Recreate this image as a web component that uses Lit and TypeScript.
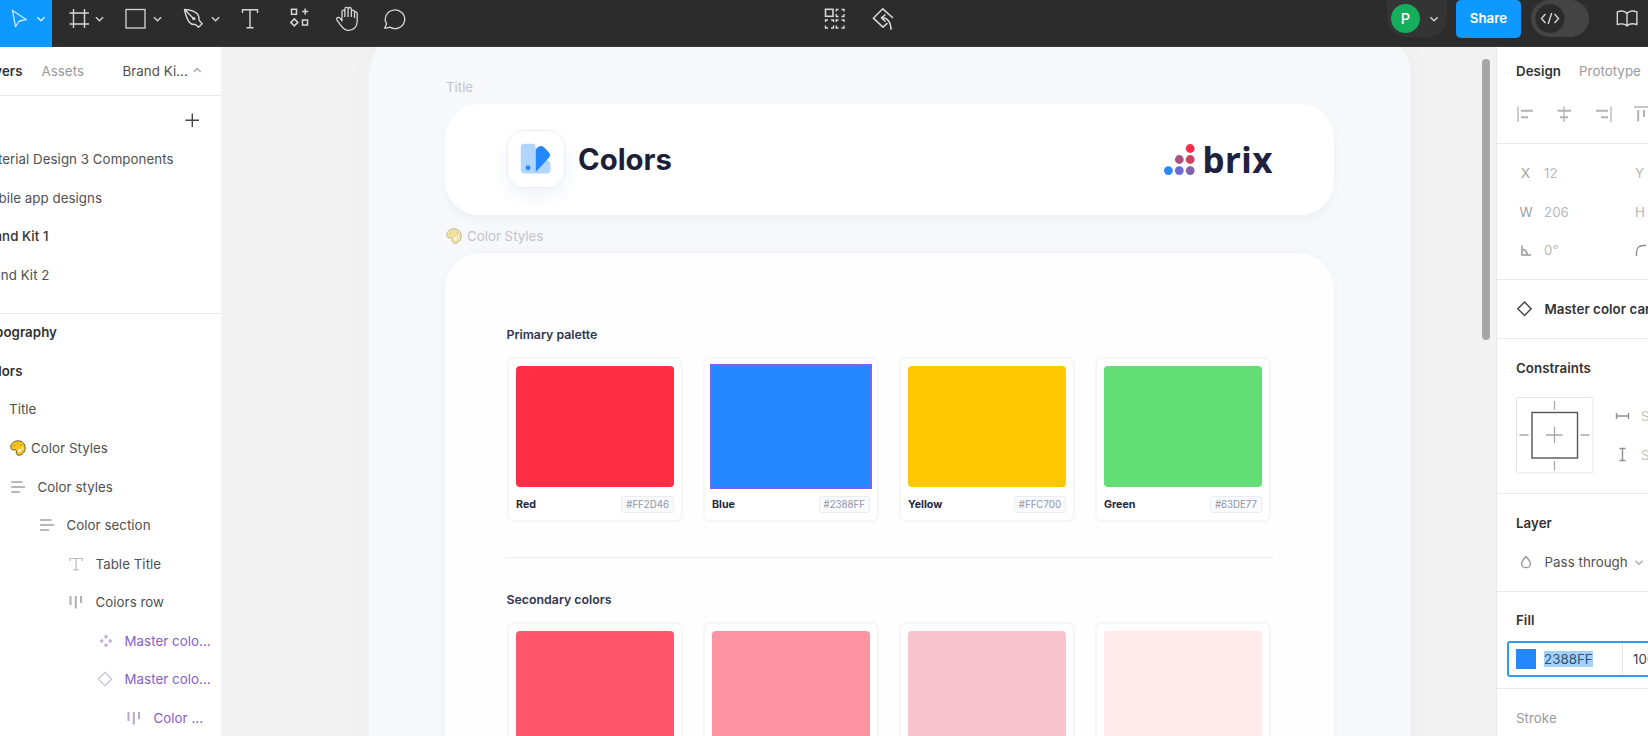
import { LitElement, html, svg, css, nothing } from "lit";
import { customElement } from "lit/decorators.js";
import { styleMap } from "lit/directives/style-map.js";

type Swatch = { name: string; hex: string; color: string; selected?: boolean };

const PRIMARY: Swatch[] = [
  { name: "Red", hex: "#FF2D46", color: "#ff2d46" },
  { name: "Blue", hex: "#2388FF", color: "#2388ff", selected: true },
  { name: "Yellow", hex: "#FFC700", color: "#ffc700" },
  { name: "Green", hex: "#63DE77", color: "#63de77" },
];
const SECONDARY = ["#ff566b", "#fc93a3", "#f8c4ce", "#ffeaec"];

// Icon cell: every icon in a bar shares the bar's coordinate space.
const cell = (x: number, y: number, w: number, h: number, body: unknown) =>
  html`<svg class="cell" width=${w} height=${h} viewBox="${x} ${y} ${w} ${h}" fill="none">${body}</svg>`;

const chevron = (x: number, y: number, c = "#d0d0d0") =>
  svg`<path d="M${x - 3.6} ${y - 1.8}l3.6 3.6l3.6-3.6" stroke=${c} stroke-width="1.5"/>`;

const palette = html`<svg class="cell" width="16" height="16" viewBox="0 0 16 16">
  <path d="M8 .8C3.800.8.8 3.700.8 7.200c0 2 1.700 3 3.400 2.600 1.500-.3 2.500.5 2.100 2-.4 1.900.4 3.400 2.300 3.400 3.800 0 6.600-3.200 6.600-7.300C15.200 3.800 12.200.8 8 .8z" fill="#f7c51c" stroke="#6b5a2b" stroke-width="1"/>
  <circle cx="4.300" cy="5.400" r="1" fill="#d39a18"/><circle cx="7.500" cy="3.600" r="1" fill="#dfaa20"/><circle cx="11" cy="5" r="1" fill="#d39a18"/>
  <circle cx="9.500" cy="10.500" r="1.500" fill="#fff"/><path d="M12.500 7v3" stroke="#fff3c9" stroke-width="1.200"/>
</svg>`;

const stack = svg`<path d="M1 3h9.700M1 8h12.300M1 13h7.300" stroke="#b8b8b8" stroke-width="2.200" stroke-linecap="round"/>`;
const columns = (c: string) => svg`<path d="M2.500 2v9M7.800 2v12.500M13 2v7" stroke=${c} stroke-width="2"/>`;
const icon16 = (body: unknown) => html`<svg class="cell" width="16" height="16" viewBox="0 0 16 16" fill="none">${body}</svg>`;

@customElement("app-root")
export class AppRoot extends LitElement {
  static styles = css`
    :host { display: block; width: 1648px; height: 736px; overflow: hidden; background: #fff;
      font: 400 13.3px/20px Inter, "Liberation Sans", sans-serif; letter-spacing: .05px; color: #505050; }
    * { box-sizing: border-box; }
    .cell { display: block; flex: none; }
    .bar { display: flex; height: 47px; background: #2c2c2c; border-bottom: 1px solid #383838; }
    .move { background: #0d99ff; height: 47px; width: 52px; }
    .mid { margin-left: 380px; display: flex; }
    .end { margin-left: auto; display: flex; align-items: flex-start; }
    .user { width: 60px; height: 37px; border-radius: 0 0 19px 19px; background: #343434; display: flex; align-items: center; padding-left: 4px; }
    .avatar { width: 29px; height: 29px; border-radius: 50%; background: #14ae5c; color: #fff; font-size: 14.5px; line-height: 29px; text-align: center; font-weight: 500; }
    .share { margin-left: 9px; width: 65px; height: 37.500px; border-radius: 5px; background: #0d99ff; color: #fff; font-weight: 600; line-height: 37px; text-align: center; }
    .dev { margin-left: 10px; width: 58px; height: 37px; border-radius: 19px; background: #444; }
    .body { display: flex; height: 689px; }

    .left { width: 221px; flex: none; overflow: hidden; }
    .tabs { display: flex; height: 49px; border-bottom: 1px solid #e9e9e9; align-items: center; }
    .clip { display: flex; justify-content: flex-end; flex: none; white-space: nowrap; line-height: 38.600px; height: 38.600px; }
    .strong { font-weight: 600; color: #333; }
    .mute { color: #9a9a9a; }
    .assets { margin-left: 19px; width: 81px; }
    .pages { height: 217.500px; border-bottom: 1px solid #e9e9e9; }
    .cur { color: #333; font-weight: 500; }
    .add { display: flex; height: 44px; justify-content: flex-end; padding-right: 19px; }
    .row { display: flex; height: 38.550px; align-items: center; white-space: nowrap; }
    .layers { margin-top: -.5px; }
    .purple { color: #8560cf; }

    .canvas { position: relative; width: 1276px; flex: none; background: #f2f2f2; overflow: hidden; padding-left: 148px; border-right: 1px solid #e9e9e9; }
    .frame { margin-top: -18px; width: 1042px; height: 760px; border-radius: 46px; background: #f6f8fc; padding: 47px 77px 0 76px; box-shadow: 0 0 28px rgba(40,50,90,.025); }
    .scroll { position: absolute; left: 1261px; top: 12px; width: 7.500px; height: 281px; border-radius: 4px; background: #a6a6a6; }
    .label { display: flex; align-items: center; gap: 5px; height: 21px; padding-left: 1px; color: #c3c4c8; letter-spacing: 0; }
    .label .cell { opacity: .42; }
    .title { margin-top: 7px; height: 110.500px; border-radius: 34px; background: #fff; display: flex; align-items: center; padding: 0 61px 0 61.500px; box-shadow: 0 5px 10px rgba(30,35,60,.035); }
    .badge { width: 58px; height: 58px; border-radius: 17px; background: #fff; border: 1px solid #eceef5; box-shadow: 0 8px 16px rgba(60,90,200,.08); padding: 12.500px; margin-bottom: 1px; }
    .h1 { margin-left: 13.500px; font-size: 29.300px; line-height: 56px; font-weight: 700; color: #1c1f3a; letter-spacing: 0; padding-top: 1px; }
    .brand { margin-left: auto; display: flex; align-items: center; }
    .brix { width: 70.500px; margin-left: 7.500px; font: 700 35px/50px "Noto Sans", sans-serif; color: #1e2240; letter-spacing: .5px; padding-top: 1px; }
    .second { margin-top: 11px; }
    .panel { margin-top: 6.500px; height: 520px; border-radius: 36px 36px 0 0; background: #fefefe; padding: 72px 61.500px 0 61px; box-shadow: 0 0 10px rgba(30,35,60,.03); }
    .h2 { height: 20px; font-size: 12.350px; font-weight: 600; color: #30344f; padding-left: .5px; letter-spacing: 0; }
    .grid { margin-top: 12px; padding-left: 1px; display: grid; grid-template-columns: repeat(4, 176px); column-gap: 20px; }
    .card { height: 165px; border: 2px solid #f6f6f7; border-radius: 7px; background: #fff; padding: 7px; }
    .fill { height: 121px; border-radius: 4px; }
    .sel { outline: 2px solid #8060f2; outline-offset: -.5px; border-radius: 0; }
    .meta { display: flex; justify-content: space-between; align-items: center; margin-top: 9px; }
    .name { font-size: 10.700px; line-height: 17px; font-weight: 700; color: #23263f; letter-spacing: 0; }
    .chip { height: 17px; border: 1px solid #eaedf4; border-radius: 3px; background: #fafbfe; padding: 0 4px; line-height: 15.500px; font-size: 9.700px; color: #8f94a6; letter-spacing: 0; }
    .rule { height: 1px; background: #f1f1f3; margin: 35px 0 32px; }

    .right { width: 151px; flex: none; overflow: hidden; white-space: nowrap; }
    .sec { border-bottom: 1px solid #e9e9e9; padding-left: 19px; overflow: hidden; }
    .s1 { height: 97px; } .s2 { height: 136px; padding-top: 10px; } .s3 { height: 59px; display: flex; align-items: center; }
    .s4 { height: 155px; } .s5 { height: 98px; } .s6 { height: 97px; padding-left: 10px; padding-top: 7px; }
    .head { height: 57px; line-height: 59px; }
    .two { display: flex; height: 48px; align-items: center; gap: 18px; }
    .field { display: flex; height: 38.600px; align-items: center; color: #b9b9b9; }
    .key { width: 28px; padding-left: 5px; color: #a0a0a0; }
    .wide { padding-left: 3.500px; }
    .val { width: 91px; }
    .cons { display: flex; height: 97px; }
    .size { width: 30px; color: #c4c4c4; line-height: 38.600px; padding: 1px 0 0 10px; }
    .pass { display: flex; align-items: center; height: 20px; margin-top: 1px; }
    .fillhead { height: 42px; line-height: 43px; padding-left: 9px; }
    .input { width: 180px; height: 36px; border: 2px solid #2e9bf3; border-radius: 3px; display: flex; align-items: center; padding-left: 7px; color: #444; }
    .sw { width: 19.500px; height: 19.500px; background: #2388ff; }
    .hl { margin-left: 8.500px; background: #a4d1fb; line-height: 16px; color: #34516d; }
    .pct { margin-left: auto; width: 63px; height: 32px; line-height: 32px; border-left: 1px solid #e6e6e6; padding-left: 10px; }
  `;

  private toolbar() {
    const s = "#d6d6d6";
    return html`<div class="bar">
      <div class="move">${cell(0, 0, 52, 47, svg`<path d="M12.500 10.500l14 9.200-7.200 1.300-3.800 5.600z" stroke="#cfe9ff" stroke-width="1.300" stroke-linejoin="round"/>${chevron(41, 19, "#d8edff")}`)}</div>
      ${cell(52, 0, 60, 46, svg`<path d="M73.500 9v19M84.500 9v19M69.500 13h19.500M69.500 24h19.500" stroke=${s} stroke-width="1.400"/>${chevron(99.500, 19)}`)}
      ${cell(112, 0, 60, 46, svg`<rect x="126" y="9.500" width="19" height="18.500" stroke=${s} stroke-width="1.300"/>${chevron(157.500, 19)}`)}
      ${cell(172, 0, 56, 46, svg`<path d="M184.500 9.500c6 .3 10.500 1.700 13.200 4.800 1.800 2.200 1 4.700 1.600 6.200l2.900 3.300-3.700 3.400-3-2.700c-2.200.2-4.700-.3-6.300-2.500-2.600-3.700-3.700-7.500-4.700-12.500zM185 10l8 8" stroke=${s} stroke-width="1.400" stroke-linejoin="round"/><circle cx="193.800" cy="18.600" r="1.700" fill=${s}/>${chevron(215.500, 19)}`)}
      ${cell(228, 0, 48, 46, svg`<path d="M242.500 13V9.700h15V13M250 9.700v18M246.500 27.700h7" stroke=${s} stroke-width="1.400"/>`)}
      ${cell(276, 0, 48, 46, svg`<g stroke=${s} stroke-width="1.500"><rect x="291.500" y="9.300" width="5" height="5"/><rect x="302.500" y="20" width="5" height="5"/><path d="M305.200 8.500v6.200M302.100 11.600h6.200M294.300 18.900l3.500 3.500-3.500 3.500-3.500-3.500z"/></g>`)}
      ${cell(324, 0, 46, 46, svg`<path d="M342 21v-9.200c0-2.300 2.900-2.300 2.900 0V9c0-2.600 3.200-2.600 3.200 0v.3c0-2.600 3.300-2.300 3.300.3v2c.3-2.200 3.100-1.900 3.100.5 1.500-.9 2.700 0 2.700 1.500v7.900c0 5-3.500 8.800-8.300 8.800-3.200 0-5.500-1.300-7.300-3.900l-4.600-6.300c-1.300-2.200 1.400-3.600 3-2zM344.900 11.500v5.500M348.100 9.500v7.500M351.400 11.500v5.500M354.500 12v6" stroke=${s} stroke-width="1.300" stroke-linejoin="round"/>`)}
      ${cell(370, 0, 48, 46, svg`<path d="M384.600 28.200l2-4.300a9.700 9.300 0 1 1 3.200 3.200c-1.500.7-3.300 1-5.200 1.100z" stroke=${s} stroke-width="1.300" stroke-linejoin="round"/>`)}
      <div class="mid">
        ${cell(798, 0, 56, 46, svg`<g stroke=${s} stroke-width="1.400"><rect x="825.500" y="9.300" width="7.500" height="7" stroke-width="1.600"/><path d="M836.300 11.500v-2h2.200M841.500 9.500h2.500v2M836.300 14v2.500h2.200M841.500 16.500h2.500V14M825.500 22v-2h2.500M831 20h2.500v2M825.500 25.500v2.500h2.500M831 28h2.500v-2.500M836.300 22v-2h2.200M841.500 20h2.500v2M836.300 25.500v2.500h2.200M841.500 28h2.500v-2.500"/></g>`)}
        ${cell(854, 0, 56, 46, svg`<path d="M893 18L882.800 8.800 873.300 18.200l9.700 9 4.500-4M881.500 17.800c5.500-.3 9.300 3.500 9.500 12M885.500 14.500l-4 3.300 4 3.700" stroke=${s} stroke-width="1.600" stroke-linejoin="round"/>`)}
      </div>
      <div class="end">
        <div class="user"><div class="avatar">P</div>${cell(1419, 0, 27, 37, chevron(1433, 19))}</div>
        <div class="share">Share</div>
        <div class="dev">${cell(1531, 0, 58, 37, svg`<circle cx="1550" cy="18.500" r="14.500" fill="#2b2b2b"/><path d="M1545.500 14l-4 4.500 4 4.500M1554.500 14l4 4.500-4 4.500M1551.700 13l-3.500 11" stroke="#d6d6d6" stroke-width="1.400"/>`)}</div>
        ${cell(1589, 0, 59, 46, svg`<path d="M1627 13.500c-2-2.700-6.500-2.700-9.700-1.700v12.700c3.200-1 7.700-.8 9.700 1.500 2-2.300 6.500-2.500 9.900-1.500V11.800c-3.400-1-7.900-1-9.900 1.700zV26" stroke="#d6d6d6" stroke-width="1.400" stroke-linejoin="round"/>`)}
      </div>
    </div>`;
  }

  private clipped(text: string, end: number, cls = "") {
    return html`<div class="clip ${cls}" style=${styleMap({ width: `${end}px` })}>${text}</div>`;
  }

  private layer(text: string, icon: unknown, pad: number, gap: number, cls = "") {
    return html`<div class="row ${cls}" style=${styleMap({ paddingLeft: `${pad}px`, gap: `${gap}px` })}>${icon}<span>${text}</span></div>`;
  }

  private left() {
    return html`<div class="left">
      <div class="tabs">${this.clipped("Layers", 22.500, "strong")}<span class="assets mute">Assets</span><span>Brand Ki...</span>
        ${cell(187, 0, 20, 20, svg`<path d="M192.800 11l3.500-3.500 3.500 3.500" stroke="#aaa" stroke-width="1.300"/>`)}</div>
      <div class="pages">
        <div class="add">${cell(182, 96, 20, 44, svg`<path d="M192.300 113.500v13.500M185.500 120.300h13.500" stroke="#444" stroke-width="1.400"/>`)}</div>
        ${this.clipped("Material Design 3 Components", 173.500)}
        ${this.clipped("Mobile app designs", 102)}
        ${this.clipped("Brand Kit 1", 48.500, "cur")}
        ${this.clipped("Brand Kit 2", 49.500)}
      </div>
      <div class="layers">
        ${this.clipped("Typography", 57, "strong")}
        ${this.clipped("Colors", 22.500, "strong")}
        ${this.layer("Title", nothing, 9, 0)}
        ${this.layer("Color Styles", palette, 10, 5)}
        ${this.layer("Color styles", icon16(stack), 11, 10.500)}
        ${this.layer("Color section", icon16(stack), 40, 10.500)}
        ${this.layer("Table Title", icon16(svg`<path d="M1.800 5V2.500h12.600V5M8.100 2.500v11.300M5.500 13.800h5.200" stroke="#bdbdbd" stroke-width="1.200"/>`), 68, 11.500)}
        ${this.layer("Coiors row", icon16(columns("#b0b0b0")), 68, 11.500)}
        ${this.layer("Master colo...", icon16(svg`<path d="M8 1.500l2.200 2.200L8 5.900 5.800 3.700zM8 10.100l2.200 2.200L8 14.500l-2.200-2.200zM3.700 5.800L5.900 8l-2.200 2.200L1.500 8zM12.300 5.800L14.500 8l-2.200 2.200L10.100 8z" fill="#c0b2dc"/>`), 97.500, 11, "purple")}
        ${this.layer("Master colo...", icon16(svg`<path d="M8 1.300L14.700 8 8 14.700 1.300 8z" stroke="#c6c0d6" stroke-width="1.200"/>`), 97, 11.500, "purple")}
        ${this.layer("Color ...", icon16(columns("#b5abc9")), 126, 11.500, "purple")}
      </div>
    </div>`;
  }

  private canvas() {
    const dots: [number, number, string][] = [
      [4.400, 26.600, "#2a86fb"], [15.300, 26.600, "#6a6bd6"], [26.200, 26.600, "#8063ab"],
      [15.300, 15.500, "#a95383"], [26.200, 15.500, "#d43f5e"], [26.200, 4.500, "#fd2d47"],
    ];
    return html`<div class="canvas">
      <div class="frame">
        <div class="label">Title</div>
        <div class="title">
          <div class="badge"><svg class="cell" width="31" height="31" viewBox="0 0 32 32">
            <path d="M13 31.500L27 17.500C30 18 31.500 19.500 31.500 22v5.500c0 2.500-1.500 4-4 4z" fill="#b2d5ff"/>
            <rect x=".8" y=".8" width="15.400" height="30.700" rx="4" fill="#b2d5ff"/>
            <path d="M16.200 30V6.500l2.500-2.400c1.800-1.500 4-1.500 5.700.1l5.100 5c1.900 1.900 2 4.200.3 6.100z" fill="#2388ff"/>
            <circle cx="8.300" cy="25.500" r="2.500" fill="#2388ff"/>
          </svg></div>
          <div class="h1">Colors</div>
          <div class="brand"><svg class="cell" width="31" height="31" viewBox="0 0 31 31">${dots.map(([x, y, c]) => svg`<circle cx=${x} cy=${y} r="4.400" fill=${c}/>`)}</svg><div class="brix">brix</div></div>
        </div>
        <div class="label second">${palette}Color Styles</div>
        <div class="panel">
          <div class="h2">Primary palette</div>
          <div class="grid">${PRIMARY.map((s) => html`<div class="card">
            <div class="fill ${s.selected ? "sel" : ""}" style=${styleMap({ background: s.color })}></div>
            <div class="meta"><span class="name">${s.name}</span><span class="chip">${s.hex}</span></div>
          </div>`)}</div>
          <div class="rule"></div>
          <div class="h2">Secondary colors</div>
          <div class="grid">${SECONDARY.map((c) => html`<div class="card"><div class="fill" style=${styleMap({ background: c })}></div></div>`)}</div>
        </div>
      </div>
      <div class="scroll"></div>
    </div>`;
  }

  private right() {
    const g = "#b3b3b3";
    return html`<div class="right">
      <div class="sec s1">
        <div class="two"><span class="strong">Design</span><span class="mute">Prototype</span></div>
        ${cell(1516, 95, 132, 40, svg`<g stroke=${g} stroke-width="2"><path d="M1518 106.500v15.500M1611 106.500v15.500M1564 106.500v15.500M1634 107h14" stroke-width="1.300"/><path d="M1521 110.700h12M1521 117.200h7M1557.500 110.700h13.500M1560 117.200h8M1596 110.700h12M1601 117.200h7M1638.200 110v11.500M1644 110v7"/></g>`)}
      </div>
      <div class="sec s2">
        <div class="field"><span class="key">X</span><span class="val">12</span><span>Y</span></div>
        <div class="field"><span class="key wide">W</span><span class="val">206</span><span>H</span></div>
        <div class="field">${cell(1516, 231, 28, 38, svg`<path d="M1522 245.500v9.500h9M1522 249.500c3 0 5 2 5.300 5.300" stroke="#999" stroke-width="1.500"/>`)}<span class="val">0°</span>${cell(1634, 231, 14, 38, svg`<path d="M1636.500 256v-3.500c0-4 2.500-7 6.500-7h3" stroke="#888" stroke-width="1.300"/>`)}</div>
      </div>
      <div class="sec s3">${cell(1516, 295, 28.500, 30, svg`<path d="M1524.500 303l6.700 6.700-6.700 6.700-6.700-6.700z" stroke="#444" stroke-width="1.400"/>`)}<span class="strong">Master color card</span></div>
      <div class="sec s4">
        <div class="head strong">Constraints</div>
        <div class="cons">${cell(1516, 397, 115, 97, svg`<rect x="1516.500" y="398.500" width="76.500" height="75.500" rx="1.500" stroke="#e4e4e4"/><rect x="1532" y="413.500" width="45.500" height="45.500" stroke="#555" stroke-width="1.400"/><path d="M1554.500 402v9M1554.500 462v9M1519.500 436h9M1580.500 436h9M1554.500 428v16M1546 436h16.500" stroke="#a8a8a8" stroke-width="1.300"/><path d="M1616.500 414v6M1628.500 414v6M1616.500 417h12M1619.500 449.500h6M1619.500 461.500h6M1622.500 449.500v12" stroke="#909090" stroke-width="1.400"/>`)}<div class="size">Scale<br>Scale</div></div>
      </div>
      <div class="sec s5">
        <div class="head strong">Layer</div>
        <div class="pass">${cell(1516, 553, 28.500, 20, svg`<path d="M1526 557.500c2.700 3 4.500 4.800 4.500 6.900a4.500 4.300 0 0 1-9 0c0-2.100 1.800-3.900 4.500-6.900z" stroke="#929292" stroke-width="1.300"/>`)}<span>Pass through</span>${cell(1627, 553, 21, 20, chevron(1638, 563.500, "#aaa"))}</div>
      </div>
      <div class="sec s6">
        <div class="fillhead strong">Fill</div>
        <div class="input"><div class="sw"></div><span class="hl">2388FF</span><span class="pct">100%</span></div>
      </div>
      <div class="sec"><div class="head mute">Stroke</div></div>
    </div>`;
  }

  render() {
    return html`${this.toolbar()}<div class="body">${this.left()}${this.canvas()}${this.right()}</div>`;
  }
}
